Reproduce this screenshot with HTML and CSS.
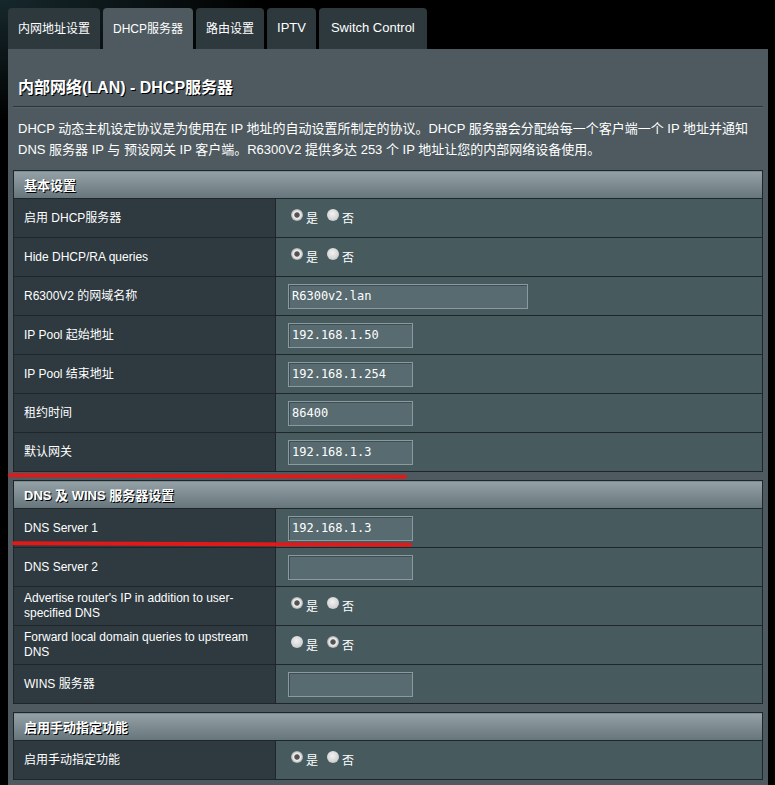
FILE: index.html
```html
<!DOCTYPE html>
<html lang="zh-CN">
<head>
<meta charset="utf-8">
<title>DHCP服务器</title>
<link rel="stylesheet" href="styles.css">
</head>
<body>
<div class="page">
  <nav class="tabs">
    <div class="tab">内网地址设置</div>
    <div class="tab tab-active">DHCP服务器</div>
    <div class="tab">路由设置</div>
    <div class="tab tab-latin">IPTV</div>
    <div class="tab tab-latin tab-wide">Switch Control</div>
  </nav>
  <main class="panel">
    <h1 class="title">内部网络(LAN) - DHCP服务器</h1>
    <div class="divider"></div>
    <p class="desc">DHCP 动态主机设定协议是为使用在 IP 地址的自动设置所制定的协议。DHCP 服务器会分配给每一个客户端一个 IP 地址并通知<br>DNS 服务器 IP 与 预设网关 IP 客户端。R6300V2 提供多达 253 个 IP 地址让您的内部网络设备使用。</p>

    <table class="form-table">
      <thead><tr><th colspan="2">基本设置</th></tr></thead>
      <tbody>
        <tr><td class="label">启用 DHCP服务器</td><td class="value"><input class="radio" type="radio" name="r1" checked><span class="opt">是</span><input class="radio" type="radio" name="r1"><span class="opt">否</span></td></tr>
        <tr><td class="label">Hide DHCP/RA queries</td><td class="value"><input class="radio" type="radio" name="r2" checked><span class="opt">是</span><input class="radio" type="radio" name="r2"><span class="opt">否</span></td></tr>
        <tr><td class="label">R6300V2 的网域名称</td><td class="value"><input class="text-input text-input-wide" type="text" value="R6300v2.lan"></td></tr>
        <tr><td class="label">IP Pool 起始地址</td><td class="value"><input class="text-input" type="text" value="192.168.1.50"></td></tr>
        <tr><td class="label">IP Pool 结束地址</td><td class="value"><input class="text-input" type="text" value="192.168.1.254"></td></tr>
        <tr><td class="label">租约时间</td><td class="value"><input class="text-input" type="text" value="86400"></td></tr>
        <tr><td class="label">默认网关</td><td class="value"><input class="text-input" type="text" value="192.168.1.3"></td></tr>
      </tbody>
    </table>

    <table class="form-table">
      <thead><tr><th colspan="2">DNS 及 WINS 服务器设置</th></tr></thead>
      <tbody>
        <tr><td class="label">DNS Server 1</td><td class="value"><input class="text-input" type="text" value="192.168.1.3"></td></tr>
        <tr><td class="label">DNS Server 2</td><td class="value"><input class="text-input" type="text" value=""></td></tr>
        <tr><td class="label">Advertise router's IP in addition to user-specified DNS</td><td class="value"><input class="radio" type="radio" name="r3" checked><span class="opt">是</span><input class="radio" type="radio" name="r3"><span class="opt">否</span></td></tr>
        <tr><td class="label">Forward local domain queries to upstream DNS</td><td class="value"><input class="radio" type="radio" name="r4"><span class="opt">是</span><input class="radio" type="radio" name="r4" checked><span class="opt">否</span></td></tr>
        <tr><td class="label">WINS 服务器</td><td class="value"><input class="text-input" type="text" value=""></td></tr>
      </tbody>
    </table>

    <table class="form-table">
      <thead><tr><th colspan="2">启用手动指定功能</th></tr></thead>
      <tbody>
        <tr><td class="label">启用手动指定功能</td><td class="value"><input class="radio" type="radio" name="r5" checked><span class="opt">是</span><input class="radio" type="radio" name="r5"><span class="opt">否</span></td></tr>
      </tbody>
    </table>
  </main>
  <div class="mark mark-gateway"></div>
  <div class="mark mark-dns"></div>
</div>
</body>
</html>
```

FILE: styles.css
```css
html, body {
  margin: 0;
  padding: 0;
}

body {
  background: radial-gradient(ellipse 260px 120px at 0 0, #16282c 0%, #000 100%) no-repeat, #000;
  color: #fff;
  font-family: "Liberation Sans", "Noto Sans CJK SC", Arial, sans-serif;
  font-size: 12px;
  height: 785px;
  overflow: hidden;
}

.page {
  position: relative;
  padding: 8px 0 0 8px;
  width: 760px;
}

.tabs {
  display: flex;
  gap: 3px;
  height: 41px;
}

.tab {
  display: flex;
  align-items: center;
  padding: 0 10px 2px;
  background: #2e393e;
  border-radius: 4px 4px 0 0;
  font-size: 12px;
  color: #fff;
}

.tab-latin {
  font-size: 13px;
}

.tab-wide {
  padding: 0 12px 2px;
}

.tab-active {
  background: #4e5a5f;
}

.panel {
  background: #4e5a5f;
  padding: 29px 5px 8px;
}

.title {
  margin: 0 0 8px;
  padding-left: 5px;
  font-size: 16px;
  line-height: 20px;
  font-weight: bold;
  text-shadow: 1px 1px 0 #000;
}

.divider {
  height: 1px;
  background: #2b3438;
  border-bottom: 1px solid #56646a;
}

.desc {
  margin: 10px 0 10px;
  padding-left: 5px;
  font-size: 13px;
  line-height: 21px;
  white-space: nowrap;
}

.form-table {
  width: 750px;
  border-collapse: collapse;
  border: 1px solid #1f2629;
  margin-bottom: 8px;
}

.form-table:last-child {
  margin-bottom: 0;
}

.form-table th {
  height: 27px;
  padding: 0 10px;
  text-align: left;
  font-size: 13px;
  font-weight: bold;
  color: #fff;
  text-shadow: 1px 1px 0 #000;
  background: linear-gradient(#94a2a7, #66757b);
  border: 1px solid #1f2629;
}

.form-table td {
  height: 38px;
  padding: 0 10px;
  border: 1px solid #1f2629;
  line-height: 15px;
  vertical-align: middle;
}

.label {
  width: 241px;
  background: #2e3a3f;
  font-size: 12px;
}

.value {
  background: #475a5e;
  padding-left: 12px !important;
}

.radio {
  appearance: none;
  -webkit-appearance: none;
  width: 12px;
  height: 12px;
  margin: 0 3px 0 3px;
  border-radius: 50%;
  vertical-align: -1px;
  background: radial-gradient(circle at 45% 40%, #f2f2f2 0%, #d4d4d4 60%, #a8a8a8 100%);
}

.radio:checked {
  background: radial-gradient(circle at 50% 50%, #4a4a4a 0, #5a5a5a 2.3px, #f4f4f4 3.2px, #d6d6d6 4.6px, #a6a6a6 6px);
}

.opt {
  display: inline-block;
  font-size: 12px;
  margin-right: 6px;
  vertical-align: -3px;
}

.text-input {
  box-sizing: border-box;
  width: 125px;
  height: 25px;
  margin: 0;
  padding: 0 3px;
  background: #576b70;
  border: 1px solid #8a9a9f;
  box-shadow: inset 1px 1px 0 #3e4e52;
  color: #fff;
  font-family: "DejaVu Sans Mono", "Liberation Mono", monospace;
  font-size: 12px;
  vertical-align: middle;
  outline: none;
}

.text-input-wide {
  width: 240px;
}

.mark {
  position: absolute;
  height: 4px;
  background: #de1a1a;
  border-radius: 2px;
}

.mark-gateway {
  left: 8px;
  top: 474px;
  width: 399px;
  transform: rotate(0.2deg);
}

.mark-dns {
  left: 12px;
  top: 542px;
  width: 400px;
  transform: rotate(0.25deg);
}
```
